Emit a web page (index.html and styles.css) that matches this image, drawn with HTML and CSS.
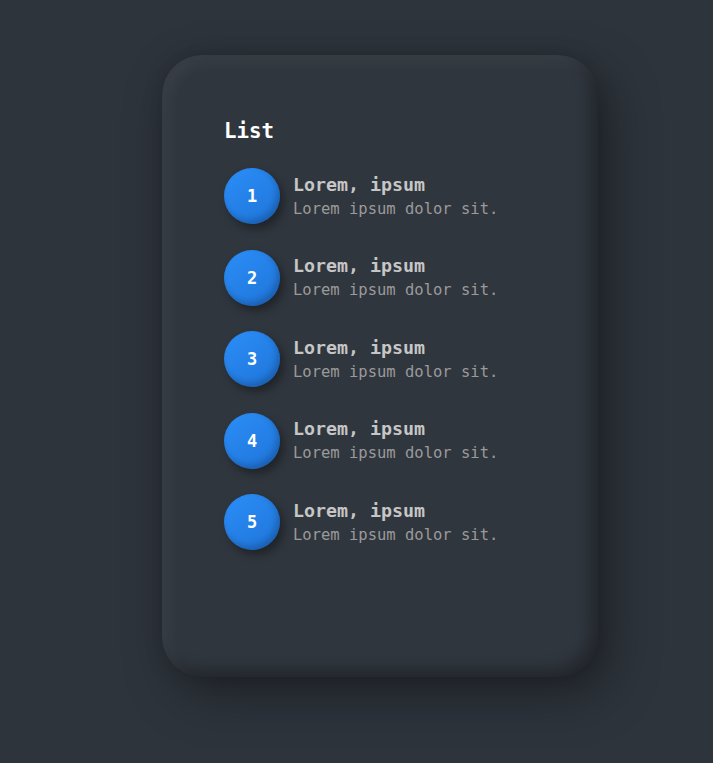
FILE: index.html
```html
<!DOCTYPE html>
<html>
<head>
<meta charset="utf-8">
<link rel="stylesheet" href="styles.css">
</head>
<body>
<div class="card">
  <h2 class="title">List</h2>
  <ul class="list">
    <li class="item"><span class="num">1</span><div class="text"><div class="head">Lorem, ipsum</div><div class="sub">Lorem ipsum dolor sit.</div></div></li>
    <li class="item"><span class="num">2</span><div class="text"><div class="head">Lorem, ipsum</div><div class="sub">Lorem ipsum dolor sit.</div></div></li>
    <li class="item"><span class="num">3</span><div class="text"><div class="head">Lorem, ipsum</div><div class="sub">Lorem ipsum dolor sit.</div></div></li>
    <li class="item"><span class="num">4</span><div class="text"><div class="head">Lorem, ipsum</div><div class="sub">Lorem ipsum dolor sit.</div></div></li>
    <li class="item"><span class="num">5</span><div class="text"><div class="head">Lorem, ipsum</div><div class="sub">Lorem ipsum dolor sit.</div></div></li>
  </ul>
</div>
</body>
</html>
```
FILE: styles.css
```css
html, body {
  margin: 0;
  height: 100%;
  background: #2e343c;
}
body {
  padding: 55px 0 0 162px;
  box-sizing: border-box;
  font-family: "DejaVu Sans Mono", monospace;
  overflow: hidden;
}
.card {
  width: 436px;
  height: 622px;
  box-sizing: border-box;
  border-radius: 40px;
  background: #30363e;
  padding: 64px 0 0 62px;
  box-shadow:
    inset 8px 8px 14px rgba(255,255,255,0.045),
    inset -8px -8px 14px rgba(0,0,0,0.28),
    12px 18px 50px rgba(0,0,0,0.35),
    0 0 20px rgba(0,0,0,0.15);
}
.title {
  margin: 0;
  font-size: 20.8px;
  font-weight: bold;
  color: #ffffff;
  line-height: 24px;
}
.list {
  list-style: none;
  margin: 25px 0 0 0;
  padding: 0;
  display: flex;
  flex-direction: column;
  gap: 25.5px;
}
.item {
  display: flex;
  align-items: center;
  gap: 13px;
}
.num {
  width: 56px;
  height: 56px;
  border-radius: 50%;
  flex: none;
  display: flex;
  align-items: center;
  justify-content: center;
  color: #fff;
  font-weight: bold;
  font-size: 17px;
  background: linear-gradient(145deg, #2b8ef8, #1f74d8);
  box-shadow:
    inset -3px -4px 6px rgba(0,0,0,0.2),
    4px 5px 8px rgba(0,0,0,0.35);
}
.text {
  display: flex;
  flex-direction: column;
  margin-top: 1px;
}
.head {
  font-size: 18.3px;
  font-weight: bold;
  color: #c6c6c6;
  line-height: 22px;
}
.sub {
  font-size: 15.5px;
  color: #9a9a9a;
  line-height: 22px;
  padding-top: 2px;
}
```
